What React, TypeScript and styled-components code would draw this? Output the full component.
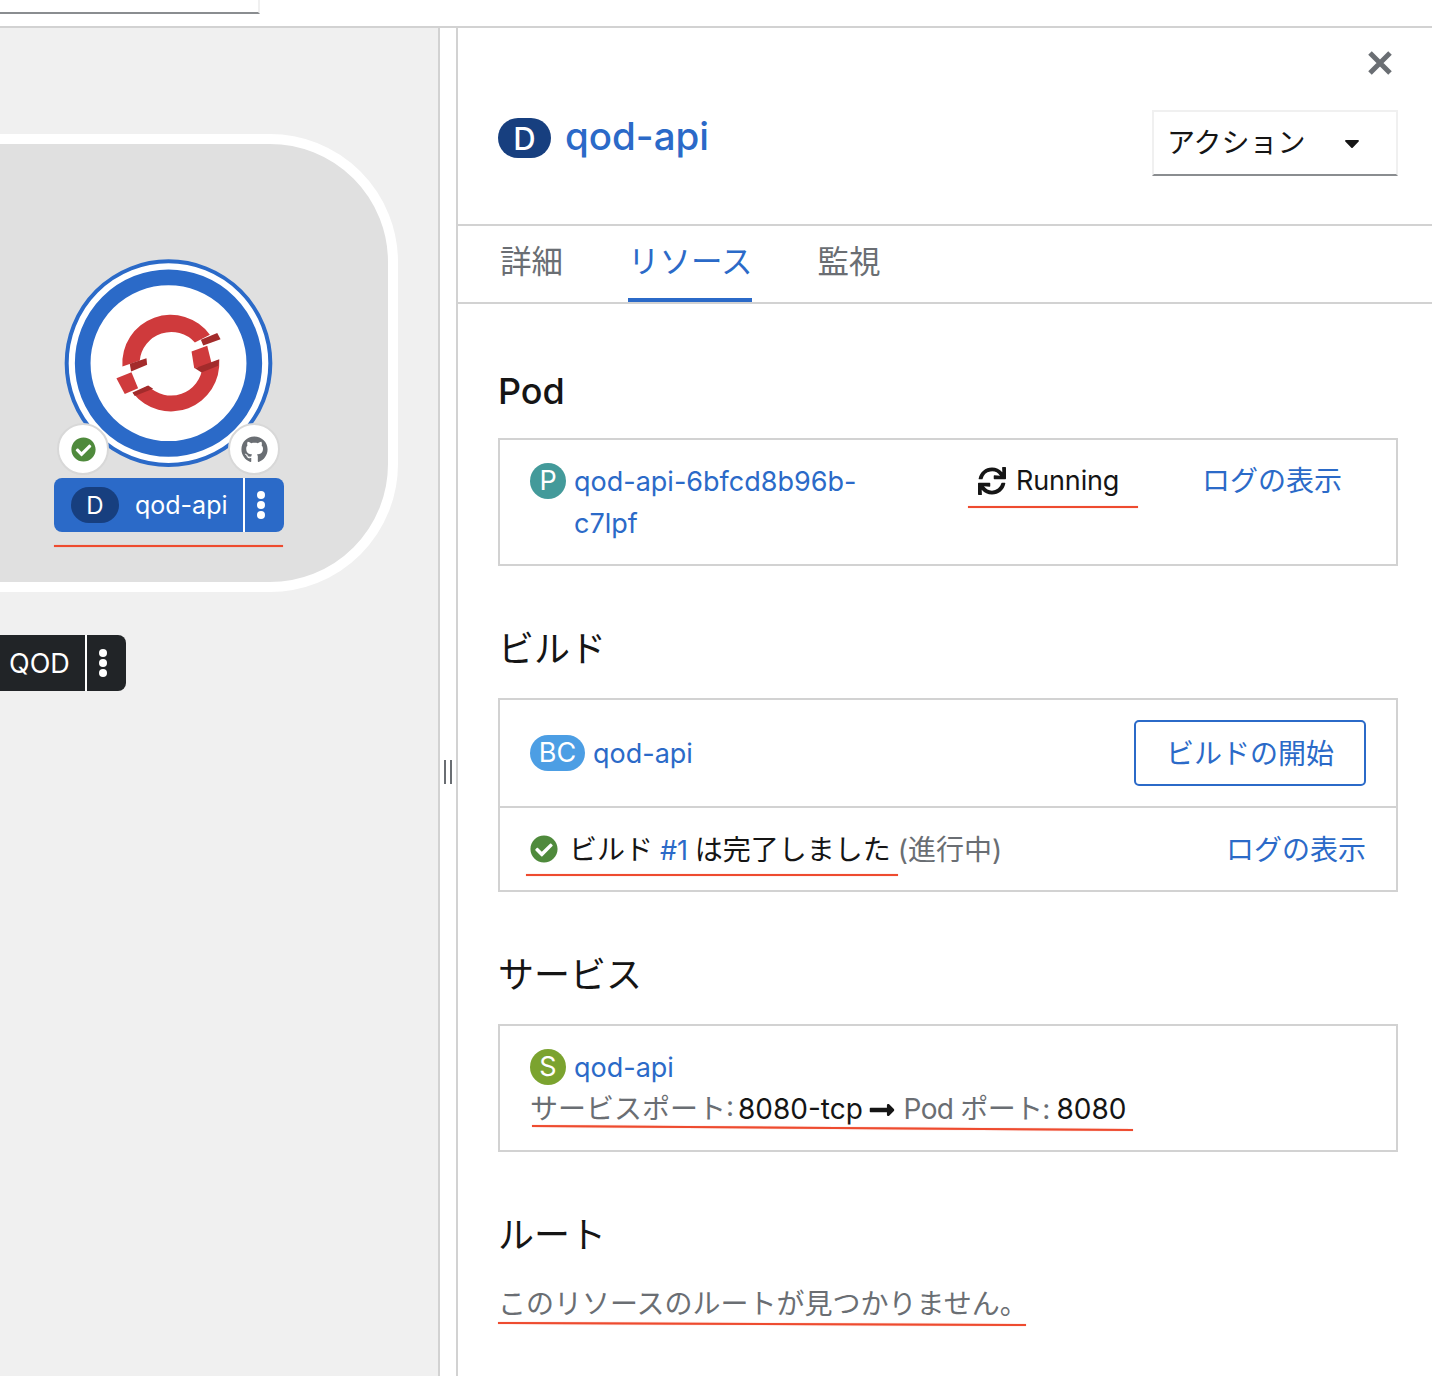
import React from 'react';
import styled, { createGlobalStyle } from 'styled-components';
import { FaCaretDown, FaCheckCircle, FaGithub, FaLongArrowAltRight, FaSync } from 'react-icons/fa';

const BLUE = '#2b6ac8';
const FONT = `Inter, 'Noto Sans CJK JP', sans-serif`;

const GlobalStyle = createGlobalStyle`
  html, body {
    margin: 0;
    padding: 0;
    background: #fff;
    overflow: hidden;
  }
  * {
    box-sizing: border-box;
  }
  body {
    font-family: ${FONT};
    color: #151515;
  }
`;

const OpenShiftNode = () => (
  <NodeSvg viewBox="190 55 632 632">
    <circle cx="506" cy="370" r="305" fill="#fff" stroke={BLUE} strokeWidth="12" />
    <circle cx="506" cy="370" r="257" fill="#fff" stroke={BLUE} strokeWidth="47" />
    <path d="M368 380 A145 145 0 0 1 630 285 L585 308 A95 95 0 0 0 420 362 Z" fill="#cf3a3c" />
    <path d="M658 360 A145 145 0 0 1 400 460 L445 438 A95 95 0 0 0 608 380 Z" fill="#cf3a3c" />
    <polygon points="350,415 395,397 415,445 375,462" fill="#cf3a3c" />
    <polygon points="575,335 622,318 636,375 583,385" fill="#cf3a3c" />
    <polygon points="390,372 440,355 442,375 394,395" fill="#a32b2b" />
    <polygon points="603,300 652,280 662,298 610,317" fill="#a32b2b" />
    <polygon points="585,385 658,358 655,378 605,398" fill="#a32b2b" />
    <polygon points="398,458 445,437 460,447 405,468" fill="#a32b2b" />
  </NodeSvg>
);

const CloseIcon = () => (
  <svg width="26" height="26" viewBox="0 0 26 26">
    <path d="M3 3 L23 23 M23 3 L3 23" stroke="#6a6e73" strokeWidth="5" fill="none" />
  </svg>
);

const App = () => {
  return (
    <Page>
      <GlobalStyle />
      <TopBar>
        <SearchInput />
      </TopBar>
      <Main>
        <Canvas>
          <Hull />
          <OpenShiftNode />
          <Decorator $left={57}>
            <FaCheckCircle size={25} color="#4f8a3c" />
          </Decorator>
          <Decorator $left={228}>
            <FaGithub size={27} color="#6a6e73" />
          </Decorator>
          <NodeLabel>
            <NodeBadge>D</NodeBadge>
            <NodeName>qod-api</NodeName>
            <Kebab />
          </NodeLabel>
          <CanvasRedLine />
          <GroupLabel>
            <GroupName>QOD</GroupName>
            <Kebab />
          </GroupLabel>
        </Canvas>
        <Splitter>
          <Grip />
          <Grip />
        </Splitter>
        <Panel>
          <PanelHeader>
            <CloseRow>
              <CloseIcon />
            </CloseRow>
            <TitleRow>
              <Title>
                <TitleBadge>D</TitleBadge>
                <TitleText>qod-api</TitleText>
              </Title>
              <ActionButton>
                アクション
                <FaCaretDown size={24} color="#151515" />
              </ActionButton>
            </TitleRow>
          </PanelHeader>
          <Tabs>
            <Tab>詳細</Tab>
            <Tab $active>リソース</Tab>
            <Tab>監視</Tab>
          </Tabs>
          <Content>
            <Heading>Pod</Heading>
            <Box>
              <PodRow>
                <NameCell>
                  <ResourceBadge $color="#439a9a">P</ResourceBadge>
                  <ResourceLink>qod-api-6bfcd8b96b-c7lpf</ResourceLink>
                </NameCell>
                <StatusCell>
                  <FaSync size={28} color="#151515" />
                  Running
                  <RedLine $left={-10} $width={170} $bottom={-6} />
                </StatusCell>
                <LogLink>ログの表示</LogLink>
              </PodRow>
            </Box>

            <Heading>ビルド</Heading>
            <Box>
              <BuildRow>
                <NameCell>
                  <ResourceBadge $color="#4c9ee4" $wide>BC</ResourceBadge>
                  <ResourceLink>qod-api</ResourceLink>
                </NameCell>
                <StartButton>ビルドの開始</StartButton>
              </BuildRow>
              <BuildStatusRow>
                <BuildStatus>
                  <FaCheckCircle size={28} color="#4f8a3c" />
                  <BuildText>
                    ビルド <HashLink>#1</HashLink> は完了しました <Muted>(進行中)</Muted>
                  </BuildText>
                  <RedLine $left={-4} $width={372} $bottom={-8} />
                </BuildStatus>
                <LogLink>ログの表示</LogLink>
              </BuildStatusRow>
            </Box>

            <Heading>サービス</Heading>
            <Box>
              <ServiceBody>
                <NameCell>
                  <ResourceBadge $color="#7ba32f">S</ResourceBadge>
                  <ResourceLink>qod-api</ResourceLink>
                </NameCell>
                <PortRow>
                  <Muted>サービスポート:</Muted> 8080-tcp <FaLongArrowAltRight size={28} color="#151515" />{' '}
                  <PodPort>Pod ポート:</PodPort> 8080
                  <RedLine $left={2} $width={601} $bottom={1} $tilt={0.38} />
                </PortRow>
              </ServiceBody>
            </Box>

            <Heading>ルート</Heading>
            <EmptyText>
              このリソースのルートが見つかりません。
              <RedLine $left={0} $width={528} $bottom={0} $tilt={0.2} />
            </EmptyText>
          </Content>
        </Panel>
      </Main>
    </Page>
  );
};

export default App;

const Page = styled.div`
  width: 1432px;
  height: 1376px;
  display: flex;
  flex-direction: column;
  overflow: hidden;
`;

const TopBar = styled.div`
  height: 28px;
  flex: none;
  border-bottom: 2px solid #d2d2d2;
`;

const SearchInput = styled.div`
  width: 260px;
  height: 14px;
  border-bottom: 2px solid #8a8d90;
  border-right: 2px solid #f0f0f0;
`;

const Main = styled.div`
  flex: 1;
  display: flex;
  min-height: 0;
`;

const Canvas = styled.div`
  position: relative;
  width: 440px;
  flex: none;
  background: #f0f0f0;
  border-right: 2px solid #d2d2d2;
  overflow: hidden;
`;

const Hull = styled.div`
  position: absolute;
  left: -240px;
  top: 106px;
  width: 638px;
  height: 458px;
  background: #e0e0e0;
  border: 10px solid #fff;
  border-radius: 128px;
`;

const NodeSvg = styled.svg`
  position: absolute;
  left: 63px;
  top: 230px;
  width: 211px;
  height: 211px;
`;

const Decorator = styled.div<{ $left: number }>`
  position: absolute;
  left: ${(p) => p.$left}px;
  top: 395px;
  width: 52px;
  height: 52px;
  border-radius: 50%;
  background: #fff;
  border: 2px solid #d8d8d8;
  display: flex;
  align-items: center;
  justify-content: center;
`;

const NodeLabel = styled.div`
  position: absolute;
  left: 54px;
  top: 450px;
  width: 230px;
  height: 54px;
  border-radius: 8px;
  background: ${BLUE};
  color: #fff;
  display: flex;
  align-items: center;
  padding-left: 17px;
`;

const NodeBadge = styled.span`
  width: 48px;
  height: 36px;
  border-radius: 18px;
  background: #173f7f;
  display: flex;
  align-items: center;
  justify-content: center;
  font-size: 24px;
`;

const NodeName = styled.span`
  flex: 1;
  padding-left: 16px;
  font-size: 25px;
`;

const Kebab = styled.span`
  position: relative;
  width: 41px;
  height: 100%;
  flex: none;
  border-left: 2px solid #fff;

  &::after {
    content: '';
    position: absolute;
    left: 12px;
    top: 50%;
    width: 8px;
    height: 8px;
    margin-top: -14px;
    border-radius: 50%;
    background: #fff;
    box-shadow: 0 10px 0 #fff, 0 20px 0 #fff;
  }
`;

const CanvasRedLine = styled.div`
  position: absolute;
  left: 54px;
  top: 517px;
  width: 229px;
  height: 2px;
  background: #ee4b2f;
  box-shadow: 0 0 1px rgba(238, 75, 47, 0.6);
`;

const GroupLabel = styled.div`
  position: absolute;
  left: -20px;
  top: 607px;
  width: 146px;
  height: 56px;
  border-radius: 8px;
  background: #212427;
  color: #fff;
  display: flex;
  align-items: center;
  padding-left: 29px;
`;

const GroupName = styled.span`
  flex: 1;
  font-size: 27px;
`;

const Splitter = styled.div`
  width: 16px;
  height: 100%;
  flex: none;
  display: flex;
  align-items: center;
  justify-content: center;
  gap: 4px;
  padding-top: 140px;
`;

const Grip = styled.span`
  width: 2px;
  height: 24px;
  background: #6a6e73;
`;

const Panel = styled.div`
  flex: 1;
  border-left: 2px solid #d2d2d2;
  min-width: 0;
`;

const PanelHeader = styled.div`
  height: 198px;
  border-bottom: 2px solid #d2d2d2;
  padding: 22px 34px 0 40px;
`;

const CloseRow = styled.div`
  display: flex;
  justify-content: flex-end;
  height: 26px;
  padding-right: 5px;
`;

const TitleRow = styled.div`
  display: flex;
  justify-content: space-between;
  align-items: flex-start;
  margin-top: 34px;
`;

const Title = styled.div`
  display: flex;
  align-items: center;
  gap: 14px;
  height: 56px;
`;

const TitleBadge = styled.span`
  width: 53px;
  height: 40px;
  border-radius: 20px;
  background: #173f7f;
  color: #fff;
  display: flex;
  align-items: center;
  justify-content: center;
  font-size: 31px;
  font-weight: 500;
`;

const TitleText = styled.span`
  color: ${BLUE};
  font-size: 38.5px;
  font-weight: 500;
  margin-top: -4px;
`;

const ActionButton = styled.div`
  width: 246px;
  height: 66px;
  border: 2px solid #f0f0f0;
  border-bottom-color: #8a8d90;
  display: flex;
  align-items: center;
  justify-content: space-between;
  padding: 0 32px 4px 13px;
  font-size: 28px;

  svg {
    margin-top: 4px;
  }
`;

const Tabs = styled.div`
  height: 78px;
  border-bottom: 2px solid #d2d2d2;
  display: flex;
  gap: 65px;
  padding-left: 42px;
`;

const Tab = styled.div<{ $active?: boolean }>`
  height: 76px;
  display: flex;
  align-items: center;
  padding-bottom: 6px;
  font-size: 31.5px;
  color: ${(p) => (p.$active ? BLUE : '#6a6e73')};
  border-bottom: 4px solid ${(p) => (p.$active ? BLUE : 'transparent')};
`;

const Content = styled.div`
  padding: 0 34px 0 40px;
`;

const Heading = styled.h2`
  margin: 58px 0 24px;
  height: 50px;
  line-height: 50px;
  font-size: 36px;
  font-weight: 400;
  color: #151515;

  &:first-child {
    margin: 62px 0 22px;
    font-weight: 500;
  }
`;

const Box = styled.div`
  border: 2px solid #d2d2d2;
  font-size: 28px;
`;

const PodRow = styled.div`
  display: grid;
  grid-template-columns: 448px 1fr auto;
  align-items: start;
  padding: 20px 54px 20px 30px;
  line-height: 42px;
`;

const NameCell = styled.div`
  display: flex;
  align-items: flex-start;
  gap: 8px;
  line-height: 42px;
  margin-bottom: -1px;
`;

const ResourceBadge = styled.span<{ $color: string; $wide?: boolean }>`
  flex: none;
  width: ${(p) => (p.$wide ? 55 : 36)}px;
  height: 36px;
  margin-top: 3px;
  border-radius: 18px;
  background: ${(p) => p.$color};
  color: #fff;
  display: flex;
  align-items: center;
  justify-content: center;
  font-size: 27px;
`;

const ResourceLink = styled.span`
  color: ${BLUE};
  font-size: 27px;
  max-width: 300px;
  margin-top: 1px;
`;

const HashLink = styled.span`
  color: ${BLUE};
  font-size: 27px;
`;

const StatusCell = styled.div`
  position: relative;
  display: inline-flex;
  align-items: center;
  gap: 10px;
  width: fit-content;
  font-size: 27px;
  letter-spacing: -0.15px;
`;

const RedLine = styled.span<{ $left: number; $width: number; $bottom: number; $tilt?: number }>`
  position: absolute;
  left: ${(p) => p.$left}px;
  bottom: ${(p) => p.$bottom}px;
  width: ${(p) => p.$width}px;
  height: 2px;
  background: #ee4b2f;
  box-shadow: 0 0 1px rgba(238, 75, 47, 0.6);
  transform: rotate(${(p) => p.$tilt ?? 0}deg);
`;

const LogLink = styled.span`
  color: ${BLUE};
`;

const BuildRow = styled.div`
  height: 108px;
  display: flex;
  align-items: center;
  justify-content: space-between;
  padding: 0 30px;
  border-bottom: 2px solid #d2d2d2;
`;

const StartButton = styled.div`
  width: 232px;
  height: 66px;
  border: 2px solid ${BLUE};
  border-radius: 5px;
  color: ${BLUE};
  display: flex;
  align-items: center;
  justify-content: center;
  padding-bottom: 2px;
`;

const BuildStatusRow = styled.div`
  height: 82px;
  display: flex;
  align-items: center;
  justify-content: space-between;
  padding: 0 30px;

  ${LogLink} {
    margin-top: -2px;
  }
`;

const BuildStatus = styled.div`
  position: relative;
  display: flex;
  align-items: center;
  gap: 11px;
  word-spacing: -1px;
`;

const BuildText = styled.span`
  margin-top: -2px;
`;

const Muted = styled.span`
  color: #6a6e73;
`;

const PodPort = styled(Muted)`
  letter-spacing: -0.7px;
  word-spacing: 0;
  margin-right: 3px;
`;

const ServiceBody = styled.div`
  padding: 20px 30px;
`;

const PortRow = styled.div`
  position: relative;
  line-height: 42px;
  white-space: nowrap;
  word-spacing: -4px;

  svg {
    vertical-align: -5px;
    margin: 0 4px 0 1px;
  }
`;

const EmptyText = styled.div`
  position: relative;
  width: fit-content;
  min-width: 528px;
  margin-top: -1px;
  font-size: 28px;
  line-height: 42px;
  color: #6a6e73;
`;
